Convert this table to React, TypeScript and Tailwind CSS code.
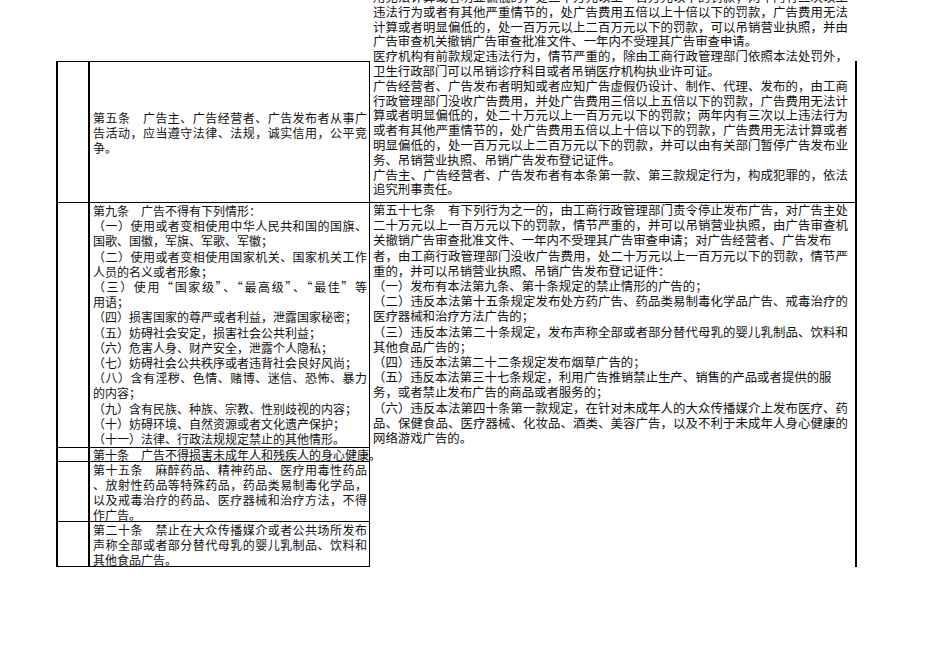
import React from 'react';

type Line = { t: string; j: boolean };

// j = full line, stretched to the cell edge like the spreadsheet export
const J = (t: string): Line => ({ t, j: true });
const N = (t: string): Line => ({ t, j: false });

const penaltyTop: Line[] = [
  J('用无法计算或者明显偏低的，处二十万元以上一百万元以下的罚款；两年内有三次以上'),
  J('违法行为或者有其他严重情节的，处广告费用五倍以上十倍以下的罚款，广告费用无法'),
  J('计算或者明显偏低的，处一百万元以上二百万元以下的罚款，可以吊销营业执照，并由'),
  N('广告审查机关撤销广告审查批准文件、一年内不受理其广告审查申请。'),
  J('医疗机构有前款规定违法行为，情节严重的，除由工商行政管理部门依照本法处罚外，'),
  N('卫生行政部门可以吊销诊疗科目或者吊销医疗机构执业许可证。'),
  J('广告经营者、广告发布者明知或者应知广告虚假仍设计、制作、代理、发布的，由工商'),
  J('行政管理部门没收广告费用，并处广告费用三倍以上五倍以下的罚款，广告费用无法计'),
  J('算或者明显偏低的，处二十万元以上一百万元以下的罚款；两年内有三次以上违法行为'),
  J('或者有其他严重情节的，处广告费用五倍以上十倍以下的罚款，广告费用无法计算或者'),
  J('明显偏低的，处一百万元以上二百万元以下的罚款，并可以由有关部门暂停广告发布业'),
  N('务、吊销营业执照、吊销广告发布登记证件。'),
  J('广告主、广告经营者、广告发布者有本条第一款、第三款规定行为，构成犯罪的，依法'),
  N('追究刑事责任。'),
];

const article5: Line[] = [
  J('第五条　广告主、广告经营者、广告发布者从事广'),
  J('告活动，应当遵守法律、法规，诚实信用，公平竞'),
  N('争。'),
];

const article9: Line[] = [
  N('第九条　广告不得有下列情形：'),
  J('（一）使用或者变相使用中华人民共和国的国旗、'),
  N('国歌、国徽，军旗、军歌、军徽；'),
  J('（二）使用或者变相使用国家机关、国家机关工作'),
  N('人员的名义或者形象；'),
  J('（三）使用“国家级”、“最高级”、“最佳”等'),
  N('用语；'),
  N('（四）损害国家的尊严或者利益，泄露国家秘密；'),
  N('（五）妨碍社会安定，损害社会公共利益；'),
  N('（六）危害人身、财产安全，泄露个人隐私；'),
  N('（七）妨碍社会公共秩序或者违背社会良好风尚；'),
  J('（八）含有淫秽、色情、赌博、迷信、恐怖、暴力'),
  N('的内容；'),
  N('（九）含有民族、种族、宗教、性别歧视的内容；'),
  N('（十）妨碍环境、自然资源或者文化遗产保护；'),
  N('（十一）法律、行政法规规定禁止的其他情形。'),
];

const article57: Line[] = [
  J('第五十七条　有下列行为之一的，由工商行政管理部门责令停止发布广告，对广告主处'),
  J('二十万元以上一百万元以下的罚款，情节严重的，并可以吊销营业执照，由广告审查机'),
  N('关撤销广告审查批准文件、一年内不受理其广告审查申请；对广告经营者、广告发布'),
  J('者，由工商行政管理部门没收广告费用，处二十万元以上一百万元以下的罚款，情节严'),
  N('重的，并可以吊销营业执照、吊销广告发布登记证件：'),
  N('（一）发布有本法第九条、第十条规定的禁止情形的广告的；'),
  J('（二）违反本法第十五条规定发布处方药广告、药品类易制毒化学品广告、戒毒治疗的'),
  N('医疗器械和治疗方法广告的；'),
  J('（三）违反本法第二十条规定，发布声称全部或者部分替代母乳的婴儿乳制品、饮料和'),
  N('其他食品广告的；'),
  N('（四）违反本法第二十二条规定发布烟草广告的；'),
  N('（五）违反本法第三十七条规定，利用广告推销禁止生产、销售的产品或者提供的服'),
  N('务，或者禁止发布广告的商品或者服务的；'),
  J('（六）违反本法第四十条第一款规定，在针对未成年人的大众传播媒介上发布医疗、药'),
  J('品、保健食品、医疗器械、化妆品、酒类、美容广告，以及不利于未成年人身心健康的'),
  N('网络游戏广告的。'),
];

const article15: Line[] = [
  J('第十五条　麻醉药品、精神药品、医疗用毒性药品'),
  J('、放射性药品等特殊药品，药品类易制毒化学品，'),
  J('以及戒毒治疗的药品、医疗器械和治疗方法，不得'),
  N('作广告。'),
];

const article20: Line[] = [
  J('第二十条　禁止在大众传播媒介或者公共场所发布'),
  J('声称全部或者部分替代母乳的婴儿乳制品、饮料和'),
  N('其他食品广告。'),
];

const Lines = ({ lines, width }: { lines: Line[]; width: string }) => (
  <>
    {lines.map((l, i) => (
      <div
        key={i}
        className={`whitespace-nowrap ${width} ${l.j ? 'text-justify [text-align-last:justify]' : 'text-left'}`}
      >
        {l.t}
      </div>
    ))}
  </>
);

const LeftCell = ({ last = false }: { last?: boolean }) => (
  <div className={`col-start-1 border-l-2 border-r-2 border-t border-black ${last ? 'border-b' : ''}`} />
);

export default function App() {
  return (
    <div
      lang="zh-CN"
      className="min-h-[672px] w-[950px] overflow-hidden bg-white pl-[56px] font-['Noto_Sans_CJK_SC',sans-serif] text-[#111]"
    >
      <div className="grid grid-cols-[34px_280px_485px_2px] grid-rows-[61px_141px_245px_14px_60px_46px]">
        {/* Penalty text carried over from the row above */}
        <div className="col-start-3 row-start-1 row-span-2 pl-[3px] text-[12.4px] leading-[14.8px]">
          <div className="-mt-[10px]">
            <Lines lines={penaltyTop} width="w-[475px]" />
          </div>
        </div>

        {/* Row: 第五条 */}
        <div className="col-start-1 row-start-2 border-l-2 border-r-2 border-t border-black" />
        <div className="col-start-2 row-start-2 flex flex-col justify-center border-r border-t border-black pl-[3px] text-[12px] leading-[15px]">
          <Lines lines={article5} width="w-[274px]" />
        </div>

        {/* Row: 第九条 / 第五十七条 */}
        <div className="col-start-1 row-start-3 border-l-2 border-r-2 border-t border-black" />
        <div className="col-start-2 row-start-3 border-r border-t border-black pl-[3px] text-[12px] leading-[15.2px]">
          <Lines lines={article9} width="w-[274px]" />
        </div>
        <div className="col-start-3 row-start-3 border-t border-black pl-[3px] text-[12.4px] leading-[15.2px]">
          <Lines lines={article57} width="w-[475px]" />
        </div>

        {/* Row: 第十条 */}
        <div className="col-start-1 row-start-4 border-l-2 border-r-2 border-t border-black" />
        <div className="col-start-2 row-start-4 overflow-visible whitespace-nowrap border-r border-t border-black pl-[3px] text-[12px] leading-[13px]">
          第十条　广告不得损害未成年人和残疾人的身心健康。
        </div>

        {/* Row: 第十五条 */}
        <div className="col-start-1 row-start-5 border-l-2 border-r-2 border-t border-black" />
        <div className="col-start-2 row-start-5 border-r border-t border-black pl-[3px] text-[12px] leading-[15px]">
          <Lines lines={article15} width="w-[274px]" />
        </div>

        {/* Row: 第二十条 */}
        <div className="col-start-1 row-start-6 border-b border-l-2 border-r-2 border-t border-black" />
        <div className="col-start-2 row-start-6 border-b border-r border-t border-black pl-[3px] text-[12px] leading-[15px]">
          <Lines lines={article20} width="w-[274px]" />
        </div>

        {/* Thick right edge of the sheet */}
        <div className="col-start-4 row-start-2 row-end-7 bg-black" />
      </div>
    </div>
  );
}
